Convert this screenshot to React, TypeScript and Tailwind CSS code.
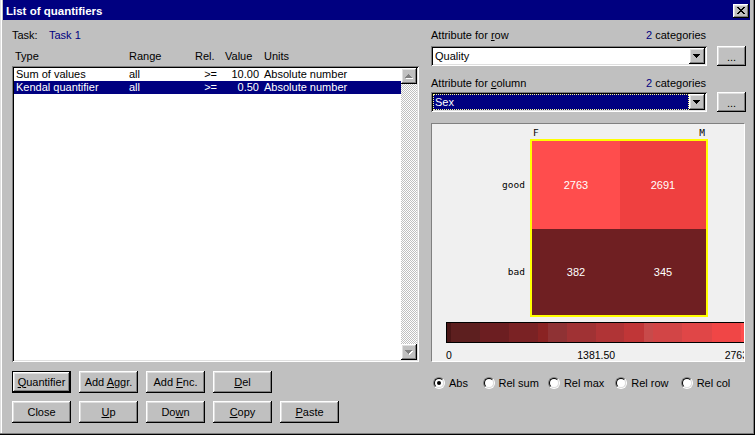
import React from "react";

const raised =
  "bg-[#c0c0c0] shadow-[inset_-1px_-1px_#000,inset_1px_1px_#fff,inset_-2px_-2px_#808080,inset_2px_2px_#dfdfdf]";
const sunken =
  "shadow-[inset_1px_1px_#808080,inset_-1px_-1px_#fff,inset_2px_2px_#000,inset_-2px_-2px_#dfdfdf]";

type Row = { type: string; range: string; rel: string; value: string; units: string };

const rows: Row[] = [
  { type: "Sum of values", range: "all", rel: ">=", value: "10.00", units: "Absolute number" },
  { type: "Kendal quantifier", range: "all", rel: ">=", value: "0.50", units: "Absolute number" },
];

const scale = [
  { w: 4, c: "#4a1616" },
  { w: 29, c: "#5d1f1f" },
  { w: 29, c: "#6c1e21" },
  { w: 29, c: "#7a2224" },
  { w: 10, c: "#8a2323" },
  { w: 19, c: "#8f3234" },
  { w: 29, c: "#a03234" },
  { w: 28, c: "#b03436" },
  { w: 20, c: "#c03637" },
  { w: 9, c: "#c84a4a" },
  { w: 29, c: "#d24546" },
  { w: 30, c: "#e04647" },
  { w: 29, c: "#f04646" },
  { w: 6, c: "#ff4d4d" },
];

function PixelRows({ rows, fill, dx = 0, dy = 0 }: { rows: number[][]; fill: string; dx?: number; dy?: number }) {
  return (
    <g fill={fill}>
      {rows.map(([x, y, w], i) => (
        <rect key={i} x={x + dx} y={y + dy} width={w} height={1} />
      ))}
    </g>
  );
}

const upRows = [[7, 6, 1], [6, 7, 3], [5, 8, 5], [4, 9, 7]];
const downRows = [[4, 6, 7], [5, 7, 5], [6, 8, 3], [7, 9, 1]];

function ScrollArrow({ down }: { down?: boolean }) {
  const r = down ? downRows : upRows;
  return (
    <div className={`w-[16px] h-[16px] ${raised}`}>
      <svg width="16" height="16" viewBox="0 0 16 16" shapeRendering="crispEdges">
        <PixelRows rows={r} fill="#fff" dx={1} dy={1} />
        <PixelRows rows={r} fill="#808080" />
      </svg>
    </div>
  );
}

function CloseButton() {
  const x = [
    [4, 3, 2], [10, 3, 2],
    [5, 4, 2], [9, 4, 2],
    [6, 5, 4],
    [7, 6, 2],
    [6, 7, 4],
    [5, 8, 2], [9, 8, 2],
    [4, 9, 2], [10, 9, 2],
  ];
  return (
    <div className={`w-[16px] h-[14px] ${raised}`}>
      <svg width="16" height="14" viewBox="0 0 16 14" shapeRendering="crispEdges">
        <PixelRows rows={x} fill="#000" />
      </svg>
    </div>
  );
}

function Button({ children, isDefault }: { children: React.ReactNode; isDefault?: boolean }) {
  return (
    <button
      className={`w-[59px] h-[22px] flex items-center justify-center ${raised} ${isDefault ? "border border-black" : ""}`}
    >
      <span>{children}</span>
    </button>
  );
}

function Combo({ value, selected }: { value: string; selected?: boolean }) {
  return (
    <div className={`w-[276px] h-[20px] bg-white p-[2px] flex ${sunken}`}>
      {selected ? (
        <div className="flex-1 bg-[#000080] border border-dotted border-[#ffff90] text-white flex items-center pl-[1px]">
          {value}
        </div>
      ) : (
        <div className="flex-1 flex items-center pl-[2px]">{value}</div>
      )}
      <div className={`w-[16px] h-[16px] ${raised}`}>
        <svg width="16" height="16" viewBox="0 0 16 16" shapeRendering="crispEdges">
          <PixelRows rows={downRows} fill="#000" />
        </svg>
      </div>
    </div>
  );
}

function Radio({ checked, label, w }: { checked?: boolean; label: string; w: string }) {
  return (
    <div className={`flex items-center gap-[4px] ${w}`}>
      <span className="w-[12px] h-[12px] rounded-full border border-t-[#808080] border-l-[#808080] border-r-white border-b-white flex">
        <span className="flex-1 rounded-full border border-t-black border-l-black border-r-[#dfdfdf] border-b-[#dfdfdf] bg-white flex items-center justify-center">
          {checked && <span className="w-[4px] h-[4px] rounded-full bg-black" />}
        </span>
      </span>
      <span>{label}</span>
    </div>
  );
}

function LeftPane() {
  return (
    <div className="w-[407px] flex flex-col">
      <div className="h-[13px] flex">
        <span className="w-[37px]">Task:</span>
        <span className="text-[#000080]">Task 1</span>
      </div>
      <div className="mt-[8px] h-[13px] grid grid-cols-[117px_66px_30px_39px_1fr]">
        <span className="pl-[3px]">Type</span>
        <span>Range</span>
        <span>Rel.</span>
        <span>Value</span>
        <span>Units</span>
      </div>
      <div className={`mt-[3px] h-[296px] bg-white p-[2px] flex ${sunken}`}>
        <div className="flex-1 flex flex-col">
          {rows.map((r, i) => (
            <div
              key={r.type}
              className={`h-[13px] grid grid-cols-[113px_60px_30px_42px_1fr] ${i === 1 ? "bg-[#000080] text-white" : ""}`}
            >
              <span className="pl-[2px] whitespace-nowrap">{r.type}</span>
              <span className="pl-[2px]">{r.range}</span>
              <span className="text-right">{r.rel}</span>
              <span className="text-right">{r.value}</span>
              <span className="pl-[5px] whitespace-nowrap">{r.units}</span>
            </div>
          ))}
        </div>
        <div className="w-[16px] flex flex-col">
          <ScrollArrow />
          <div className="flex-1 bg-[image:repeating-conic-gradient(#c0c0c0_0%_25%,#ffffff_0%_50%)] bg-[length:2px_2px]" />
          <ScrollArrow down />
        </div>
      </div>
      <div className="mt-[9px] flex gap-[8px]">
        <Button isDefault>
          <u>Q</u>uantifier
        </Button>
        <Button>
          Add <u>A</u>ggr.
        </Button>
        <Button>
          Add <u>F</u>nc.
        </Button>
        <Button>
          <u>D</u>el
        </Button>
      </div>
      <div className="mt-[8px] flex gap-[8px]">
        <Button>Close</Button>
        <Button>
          <u>U</u>p
        </Button>
        <Button>
          Do<u>w</u>n
        </Button>
        <Button>
          <u>C</u>opy
        </Button>
        <Button>
          <u>P</u>aste
        </Button>
      </div>
    </div>
  );
}

function Chart() {
  const label = "font-['DejaVu_Sans_Mono',monospace] text-[9.5px] leading-[12px]";
  return (
    <div className="w-[314px] h-[239px] bg-[#f0f0f0] border border-t-[#808080] border-l-[#808080] border-r-white border-b-white overflow-hidden flex flex-col">
      <div className={`h-[16px] ml-[98px] w-[178px] pt-[3px] flex justify-between px-[3px] ${label}`}>
        <span>F</span>
        <span>M</span>
      </div>
      <div className="flex">
        <div className={`w-[98px] pt-[2px] pr-[5px] flex flex-col items-end ${label}`}>
          <div className="h-[88px] flex items-center">good</div>
          <div className="h-[86px] flex items-center">bad</div>
        </div>
        <div className="w-[178px] h-[178px] border-2 border-[#ffff00] grid grid-cols-[88px_86px] grid-rows-[88px_86px] text-white">
          <div className="bg-[#ff4d4d] flex items-center justify-center">2763</div>
          <div className="bg-[#ef4040] flex items-center justify-center">2691</div>
          <div className="bg-[#6f1f22] flex items-center justify-center">382</div>
          <div className="bg-[#6f1f22] flex items-center justify-center">345</div>
        </div>
      </div>
      <div className="mt-[5px] ml-[14px] w-[302px] h-[21px] shrink-0 border border-black flex">
        {scale.map((s, i) => (
          <div key={i} className="h-full shrink-0" style={{ width: s.w, background: s.c }} />
        ))}
      </div>
      <div className="mt-[6px] ml-[14px] w-[302px] h-[12px] shrink-0 flex justify-between text-[10.5px] leading-[12px]">
        <span>0</span>
        <span className="pl-[16px]">1381.50</span>
        <span>2763</span>
      </div>
    </div>
  );
}

function RightPane() {
  return (
    <div className="w-[315px] flex flex-col">
      <div className="h-[13px] flex justify-between pr-[40px]">
        <span>
          Attribute for <u>r</u>ow
        </span>
        <span>
          <span className="text-[#000080]">2</span> categories
        </span>
      </div>
      <div className="mt-[4px] flex gap-[10px]">
        <Combo value="Quality" />
        <div className={`w-[29px] h-[20px] flex items-center justify-center pt-[3px] ${raised}`}>...</div>
      </div>
      <div className="mt-[11px] h-[13px] flex justify-between pr-[40px]">
        <span>
          Attribute for <u>c</u>olumn
        </span>
        <span>
          <span className="text-[#000080]">2</span> categories
        </span>
      </div>
      <div className="mt-[2px] flex gap-[10px]">
        <Combo value="Sex" selected />
        <div className={`w-[29px] h-[20px] flex items-center justify-center pt-[3px] ${raised}`}>...</div>
      </div>
      <div className="mt-[11px]">
        <Chart />
      </div>
      <div className="mt-[15px] h-[12px] pl-[2px] flex items-center">
        <Radio checked label="Abs" w="w-[50px]" />
        <Radio label="Rel sum" w="w-[66px]" />
        <Radio label="Rel max" w="w-[68px]" />
        <Radio label="Rel row" w="w-[66px]" />
        <Radio label="Rel col" w="w-[66px]" />
      </div>
    </div>
  );
}

export default function App() {
  return (
    <div className="w-[755px] h-[435px] bg-[#c0c0c0] pl-[3px] pr-[5px] pb-[3px] flex flex-col font-['Liberation_Sans',Arial,sans-serif] text-[11px] leading-[13px] text-black overflow-hidden shadow-[inset_-1px_-1px_#000,inset_-2px_-2px_#808080,inset_1px_0_#dfdfdf,inset_2px_0_#fff]">
      <div className="h-[20px] shrink-0 bg-[#000080] pt-[2px] pl-[3px] pr-[1px] flex items-center justify-between">
        <span className="text-white font-bold text-[11.5px]">List of quantifiers</span>
        <CloseButton />
      </div>
      <div className="flex pl-[9px] pt-[9px] gap-[12px]">
        <LeftPane />
        <RightPane />
      </div>
    </div>
  );
}
